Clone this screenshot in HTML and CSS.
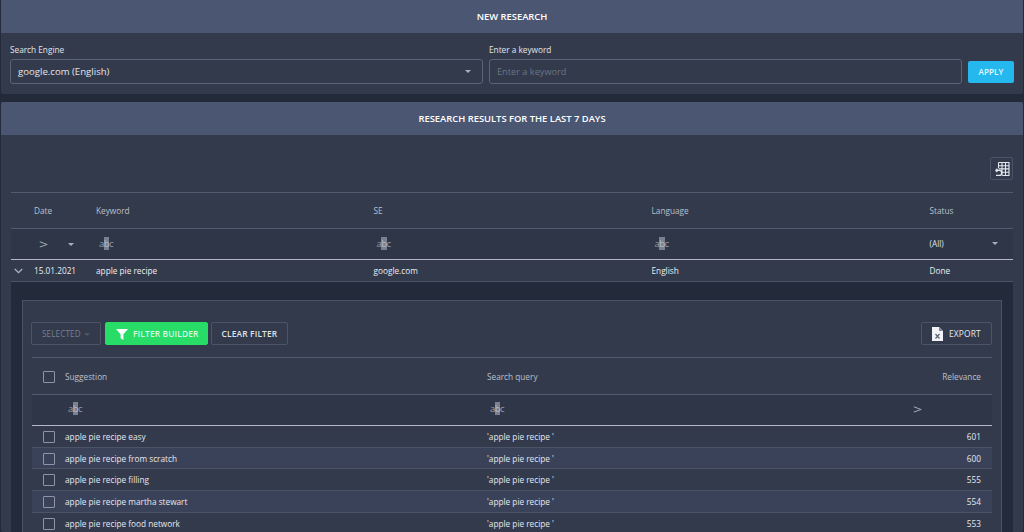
FILE: index.html
```html
<!DOCTYPE html>
<html lang="en">
<head>
<meta charset="utf-8">
<title>Research</title>
<link rel="stylesheet" href="styles.css">
</head>
<body>
<section class="panel new-panel">
  <h2 class="panel-head">NEW RESEARCH</h2>
  <div class="form">
    <div class="field engine">
      <label class="label">Search Engine</label>
      <div class="input"><span class="value">google.com (English)</span><span class="caret"></span></div>
    </div>
    <div class="field keyword">
      <label class="label">Enter a keyword</label>
      <div class="input"><span class="placeholder">Enter a keyword</span></div>
    </div>
    <button class="apply">APPLY</button>
  </div>
</section>
<section class="panel results">
  <h2 class="panel-head">RESEARCH RESULTS FOR THE LAST 7 DAYS</h2>
  <div class="results-body">
    <div class="chooser-row">
      <button class="chooser" aria-label="Reset columns">
        <svg width="18" height="18" viewBox="0 0 18 18" fill="none" stroke="#e4e7ee" stroke-width="1.1">
          <path d="M5.5 2.5h10.5v13h-6.5M5.5 2.5v5.5M9 2.5v13M12.5 2.5v13M5.5 5.7h10.5M5.5 8.9h10.5M9 12.2h7"/>
          <path d="M2.6 10.4h3.6a2.5 2.5 0 0 1 0 5H3M2.6 10.4l1.8-1.6M2.6 10.4l1.8 1.6" stroke-width="1.3"/>
        </svg>
      </button>
    </div>
    <div class="outer">
      <div class="o-row o-head">
        <span></span><span>Date</span><span>Keyword</span><span>SE</span><span>Language</span><span>Status</span>
      </div>
      <div class="o-row o-filter">
        <span></span>
        <span class="date-filter"><span class="gt">&gt;</span><span class="caret"></span></span>
        <span class="abc">a<b>b</b>c</span><span class="abc">a<b>b</b>c</span><span class="abc">a<b>b</b>c</span>
        <span class="status-filter">(All)<span class="caret"></span></span>
      </div>
      <div class="o-row o-data">
        <span class="chev"><svg width="9" height="6" viewBox="0 0 9 6" fill="none" stroke="#aeb4c2" stroke-width="1.3"><path d="M.8 1l3.7 3.6L8.2 1"/></svg></span>
        <span>15.01.2021</span><span>apple pie recipe</span><span>google.com</span><span>English</span><span>Done</span>
      </div>
      <div class="detail">
        <div class="detail-box">
          <div class="toolbar">
            <button class="btn selected">SELECTED<span class="caret dim"></span></button>
            <button class="btn green">
              <svg width="12" height="11" viewBox="0 0 12 11"><path d="M0 0h12L7.4 5.2V11L4.6 9.2V5.2z" fill="#fff"/></svg>FILTER BUILDER
            </button>
            <button class="btn">CLEAR FILTER</button>
            <button class="btn export">
              <svg width="11" height="14" viewBox="0 0 11 14"><path d="M0 0h7l4 4v10H0z" fill="#f1f3f6"/><path d="M7 0l4 4H7z" fill="#7d8597"/><path d="M3.5 7l4 4.5M7.5 7l-4 4.5" stroke="#5a6275" stroke-width="1.2"/></svg>EXPORT
            </button>
          </div>
          <div class="i-row i-head">
            <span class="check"></span><span>Suggestion</span><span>Search query</span><span class="num">Relevance</span>
          </div>
          <div class="i-row i-filter">
            <span></span><span class="abc">a<b>b</b>c</span><span class="abc">a<b>b</b>c</span><span class="gt num-gt">&gt;</span>
          </div>
          <div class="i-row i-data"><span class="check"></span><span>apple pie recipe easy</span><span>'apple pie recipe '</span><span class="num">601</span></div>
          <div class="i-row i-data alt"><span class="check"></span><span>apple pie recipe from scratch</span><span>'apple pie recipe '</span><span class="num">600</span></div>
          <div class="i-row i-data"><span class="check"></span><span>apple pie recipe filling</span><span>'apple pie recipe '</span><span class="num">555</span></div>
          <div class="i-row i-data alt"><span class="check"></span><span>apple pie recipe martha stewart</span><span>'apple pie recipe '</span><span class="num">554</span></div>
          <div class="i-row i-data"><span class="check"></span><span>apple pie recipe food network</span><span>'apple pie recipe '</span><span class="num">553</span></div>
        </div>
      </div>
    </div>
  </div>
</section>
</body>
</html>
```
FILE: styles.css
```css
* { box-sizing: border-box; }
html, body { height: 100%; }
body {
  margin: 0;
  height: 532px;
  overflow: hidden;
  padding: 0 1px;
  background: #232b3a;
  color: #e6e8ee;
  font: 8.25px/1.2 "Open Sans", "Noto Sans", sans-serif;
}
button { font: inherit; cursor: pointer; }
.panel { background: #323a4c; border-radius: 2px; }
.new-panel { height: 94px; margin-bottom: 8px; }
.panel-head {
  margin: 0;
  height: 33px;
  background: #4a5672;
  color: #fff;
  font-size: 9.4px;
  font-weight: 600;
  line-height: 34px;
  text-align: center;
}
.form { display: flex; align-items: flex-end; padding: 11px 9px 0 9px; }
.field { display: flex; flex-direction: column; }
.engine { width: 473px; margin-right: 6px; }
.keyword { width: 473px; margin-right: 6px; }
.label { color: #e3e5ea; line-height: 12px; margin-bottom: 3px; }
.input {
  height: 25px;
  border: 1px solid #5b6376;
  border-radius: 3px;
  padding: 0 7px;
  display: flex;
  align-items: center;
  justify-content: space-between;
  font-size: 9.6px;
}
.value { color: #e3e5ea; }
.placeholder { color: #6c7485; font-size: 9.2px; }
.caret {
  display: inline-block;
  width: 0; height: 0;
  border: 3px solid transparent;
  border-top: 3.5px solid #a9afbd;
  border-bottom: 0;
}
.engine .caret { margin-right: 4px; border-width: 3.5px; border-bottom: 0; }
.apply {
  width: 46px;
  height: 22px;
  margin-bottom: 1px;
  border: 0;
  border-radius: 2px;
  background: #24b8ee;
  color: #e6f7fe;
  font-size: 8.2px;
  font-weight: 600;
}
.results { height: 430px; overflow: hidden; }
.results-body { padding: 0 10px; }
.chooser-row { display: flex; justify-content: flex-end; padding-top: 22px; height: 57px; }
.chooser {
  width: 23px; height: 23px; padding: 0;
  display: flex; align-items: center; justify-content: center;
  background: #323a4c;
  border: 1px solid #4c5467;
  border-radius: 2px;
}
.outer { border-top: 1px solid #525a6d; }
.o-row {
  display: grid;
  grid-template-columns: 23px 62px 277.5px 278px 278px 1fr;
  align-items: center;
}
.o-row > span { min-width: 0; }
.o-head { height: 36px; color: #bcc0ca; border-bottom: 1px solid #525a6d; }
.o-filter { height: 31px; background: #2e3647; border-bottom: 1px solid #b3b8c4; }
.o-data { height: 22px; border-bottom: 1px solid #4b5366; color: #eceef2; padding-top: 1px; }
.chev { display: flex; padding-left: 3px; }
.date-filter { display: flex; align-items: center; gap: 20px; padding-left: 5px; }
.gt { color: #a8aebb; font-size: 16px; font-weight: 400; line-height: 1; transform: scaleY(.8); }
.abc { color: #9aa0ae; font-size: 9.5px; padding-left: 3px; letter-spacing: -.5px; }
.abc b { background: #7a8090; color: #b9bdc8; font-weight: 400; }
.status-filter { display: flex; justify-content: space-between; align-items: center; padding-right: 15px; color: #dfe2e8; }
.detail { background: #232b3a; padding: 18px 11px 0 11px; height: 260px; }
.detail-box { background: #323a4c; border: 1px solid #4a5266; border-bottom: 0; height: 100%; padding: 0 9px; }
.toolbar { display: flex; gap: 3px; padding-top: 21px; height: 56px; align-items: flex-start; }
.btn {
  height: 23px;
  padding: 1px 10px 0;
  display: inline-flex; align-items: center;
  background: transparent;
  border: 1px solid #4c5467;
  border-radius: 2px;
  color: #dfe2e8;
  font-size: 8.4px;
  font-weight: 600;
  letter-spacing: .15px;
}
.selected { color: #778095; font-weight: 400; font-size: 8.1px; width: 70px; margin: 0 1px 0 -1px; justify-content: space-between; }
.caret.dim { border-top-color: #4e5669; }
.green { background: #27dc67; border-color: #27dc67; color: #d8f9e3; gap: 5px; padding-right: 8px; }
.export { margin-left: auto; gap: 6px; width: 71px; font-weight: 400; color: #e6e8ee; }
.i-row {
  display: grid;
  grid-template-columns: 33px 422px 1fr 80px;
  align-items: center;
}
.i-head { height: 38px; color: #bcc0ca; border-top: 1px solid #525a6d; border-bottom: 1px solid #525a6d; padding-top: 1px; }
.i-filter { height: 31px; background: #2e3647; border-bottom: 1px solid #b3b8c4; padding-bottom: 2px; }
.i-data { height: 21.7px; border-bottom: 1px solid #4b5366; color: #e6e8ee; padding-top: 1px; }
.alt { background: #3a4259; }
.num { text-align: right; padding-right: 11px; }
.num-gt { padding-left: 1px; }
.check { width: 12px; height: 12px; margin-left: 11px; border: 1.3px solid #8f95a4; border-radius: 1px; }
```
